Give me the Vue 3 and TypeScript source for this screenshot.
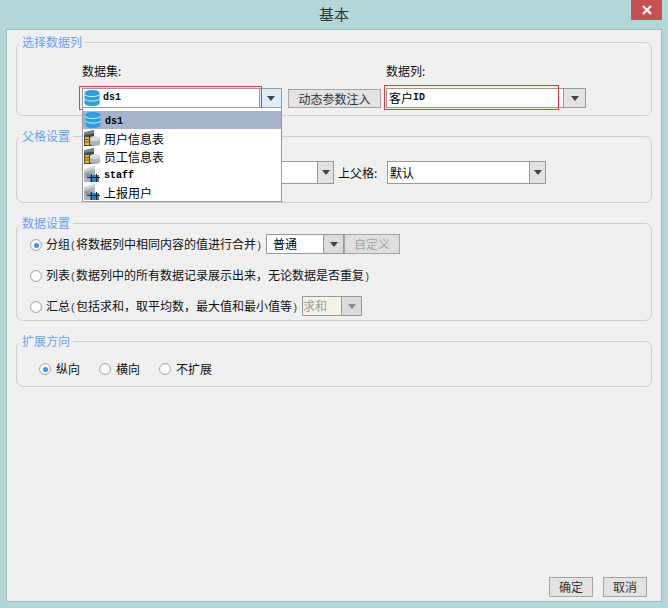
<script setup lang="ts">
interface Item { label: string; mono?: boolean; icon: string; selected?: boolean }
const items: Item[] = [
  { label: 'ds1', mono: true, icon: 'db', selected: true },
  { label: '用户信息表', icon: 'server' },
  { label: '员工信息表', icon: 'server' },
  { label: 'staff', mono: true, icon: 'table' },
  { label: '上报用户', icon: 'table' },
]
</script>

<template>
  <div class="dialog">
    <header class="titlebar">
      <span class="title">基本</span>
      <button class="close" aria-label="关闭">
        <svg width="10" height="10" viewBox="0 0 10 10"><path d="M1 1L9 9M9 1L1 9" stroke="#fff" stroke-width="2.2" /></svg>
      </button>
    </header>

    <main class="panel">
      <div class="groups">
        <fieldset class="group">
          <legend>选择数据列</legend>
          <div class="pick-grid">
            <span class="lab">数据集:</span>
            <span></span>
            <span class="lab">数据列:</span>
            <div class="anchor first">
              <div class="combo">
                <span class="val iconed">
                  <svg class="ic" width="16" height="16" viewBox="0 0 16 16"><use href="#db" /></svg>
                  <span class="mono">ds1</span>
                </span>
                <span class="arrow blue"><i></i></span>
              </div>
              <span class="red r1"></span>
              <ul class="drop">
                <li v-for="it in items" :key="it.label" :class="{ sel: it.selected }">
                  <svg class="ic" width="16" height="16" viewBox="0 0 16 16"><use :href="'#' + it.icon" /></svg>
                  <span class="txt" :class="{ mono: it.mono }">{{ it.label }}</span>
                </li>
              </ul>
            </div>
            <button class="btn inject">动态参数注入</button>
            <div class="anchor">
              <div class="combo">
                <span class="val">客户<span class="mono">ID</span></span>
                <span class="arrow"><i></i></span>
              </div>
              <span class="red r2"></span>
            </div>
          </div>
        </fieldset>

        <fieldset class="group">
          <legend>父格设置</legend>
          <div class="parents">
            <div class="combo tall left"><span class="val"></span><span class="arrow narrow"><i></i></span></div>
            <span class="up">上父格:</span>
            <div class="combo tall right"><span class="val">默认</span><span class="arrow narrow"><i></i></span></div>
          </div>
        </fieldset>

        <fieldset class="group">
          <legend>数据设置</legend>
          <div class="rows">
            <div class="row">
              <span class="radio"><span class="dot"></span></span>
              <span class="rtext">分组<b class="par">(</b>将数据列中相同内容的值进行合并<b class="par">)</b></span>
              <div class="combo mini"><span class="val">普通</span><span class="arrow gray"><i></i></span></div>
              <button class="btn custom" disabled>自定义</button>
            </div>
            <div class="row">
              <span class="radio"></span>
              <span class="rtext">列表<b class="par">(</b>数据列中的所有数据记录展示出来，无论数据是否重复<b class="par">)</b></span>
            </div>
            <div class="row">
              <span class="radio"></span>
              <span class="rtext">汇总<b class="par">(</b>包括求和，取平均数，最大值和最小值等<b class="par">)</b></span>
              <div class="combo sum"><span class="val">求和</span><span class="arrow gray dim"><i></i></span></div>
            </div>
          </div>
        </fieldset>

        <fieldset class="group">
          <legend>扩展方向</legend>
          <div class="dirs">
            <label class="dir"><span class="radio"><span class="dot"></span></span><span class="rtext">纵向</span></label>
            <label class="dir"><span class="radio"></span><span class="rtext">横向</span></label>
            <label class="dir"><span class="radio"></span><span class="rtext">不扩展</span></label>
          </div>
        </fieldset>
      </div>

      <footer class="actions">
        <button class="btn act">确定</button>
        <button class="btn act">取消</button>
      </footer>
    </main>

    <svg width="0" height="0" class="defs" aria-hidden="true">
      <defs>
        <g id="db">
          <path d="M.5 3C.5 1.300 3.500 0 8 0s7.500 1.300 7.500 3v10c0 1.700-3 3-7.500 3S.5 14.700.5 13z" fill="#2b9fe2" />
          <path d="M.5 4.500C2 6 5 6.600 8 6.600s6-.6 7.500-2.100M.5 9C2 10.500 5 11.100 8 11.100S14 10.500 15.500 9" fill="none" stroke="#dff1fb" stroke-width="1" />
        </g>
        <g id="server">
          <path d="M0 2.500L10 0v16H0z" fill="#3f4a50" />
          <path d="M0 2.500L10 0v3.500L0 5z" fill="#6a8a90" />
          <rect x="1" y="7" width="4" height="8" fill="#f2b01e" />
          <path d="M1 9.500h4M1 12h4" stroke="#7a5a10" stroke-width="1" />
          <path d="M6 8.500v5.500c0 1.300 2.200 2 5 2s5-.7 5-2V8.500z" fill="#aeb5ba" />
          <ellipse cx="11" cy="8.500" rx="5" ry="2.500" fill="#d8dcdf" />
        </g>
        <g id="table">
          <path d="M0 3.500L11 0v16H0z" fill="#a9b2b8" />
          <path d="M0 3.500L11 0v3L0 6z" fill="#cfd5d9" />
          <path d="M1.500 8h5M1.500 10h5" stroke="#6f7c85" stroke-width="1" />
          <rect x="6" y="9" width="9" height="7" fill="#2f7fc4" />
          <path d="M3 11.500h13M7.500 8v8M12.500 8v8" stroke="#22262b" stroke-width="1" />
        </g>
      </defs>
    </svg>
  </div>
</template>

<style>
html, body { margin: 0; padding: 0; background: #b3d6d6; }
</style>

<style scoped>
.dialog {
  width: 668px;
  height: 608px;
  display: flex;
  flex-direction: column;
  background: #b3d6d6;
  font: 12px/16px "Noto Sans CJK SC", sans-serif;
  color: #111;
  overflow: hidden;
  position: relative;
}
.defs { position: absolute; }
.titlebar {
  height: 29px;
  flex: none;
  display: flex;
  justify-content: center;
  position: relative;
}
.title { font-size: 15px; line-height: 28px; color: #333; }
.close {
  position: absolute;
  top: 0;
  right: 6px;
  width: 31px;
  height: 20px;
  padding: 0;
  border: 0;
  background: #c75050;
  display: flex;
  align-items: center;
  justify-content: center;
}
.panel {
  flex: 1;
  margin: 0 6px 6px;
  border: 1px solid #9ebcbc;
  background: #f0f0f0;
  padding: 4px 9px 4px;
  display: flex;
  flex-direction: column;
  justify-content: space-between;
}
.groups { display: flex; flex-direction: column; gap: 12px; }
.group {
  margin: 0;
  padding: 0;
  min-width: 0;
  border: 1px solid #cdcdcd;
  border-radius: 7px;
}
legend {
  margin-left: 2px;
  padding: 0 3px;
  color: #6b9ff0;
  line-height: 16px;
}

.pick-grid {
  display: grid;
  grid-template-columns: 206px 98px 200px;
  row-gap: 10px;
  align-items: center;
  padding: 12px 0 7px 65px;
}
.lab { padding-top: 2px; height: 14px; line-height: 14px; }
.anchor { position: relative; }
.first { width: 200px; }

.combo {
  box-sizing: border-box;
  height: 20px;
  display: flex;
  border: 1px solid #999;
  background: #fff;
}
.val {
  flex: 1;
  min-width: 0;
  padding-left: 2px;
  line-height: 18px;
  display: flex;
  align-items: center;
  white-space: nowrap;
  color: #000;
}
.iconed { gap: 3px; padding-left: 1px; }
.arrow {
  flex: none;
  width: 21px;
  border-left: 1px solid #999;
  background: #e2e2e2;
  display: flex;
  align-items: center;
  justify-content: center;
}
.arrow i {
  width: 0;
  height: 0;
  border-left: 4.500px solid transparent;
  border-right: 4.500px solid transparent;
  border-top: 5px solid #444;
}
.arrow.blue { background: #e0ecfa; }
.arrow.narrow { width: 15px; }
.arrow.gray { background: #dcdcdc; width: 19px; }
.arrow.dim i { border-top-color: #8a8a8a; }
.mono {
  font-family: "Liberation Mono", monospace;
  font-size: 10px;
  font-weight: 700;
  color: #111;
}
.red {
  position: absolute;
  border: 1px solid #e8393c;
  pointer-events: none;
}
.r1 { left: -3px; top: -2px; width: 181px; height: 22px; }
.r2 { left: -2px; top: -3px; width: 173px; height: 23px; }

.drop {
  position: absolute;
  left: 0;
  top: 20px;
  z-index: 2;
  box-sizing: border-box;
  width: 200px;
  height: 94px;
  margin: 0;
  padding: 3px 0 0 1px;
  list-style: none;
  background: #fff;
  border: 1px solid #999;
  border-top: 0;
}
.drop li {
  height: 18px;
  display: flex;
  align-items: center;
  gap: 4px;
}
.drop li.sel { background: #a8b4cc; margin-left: -1px; padding-left: 2px; }
.txt { padding-top: 2px; line-height: 14px; color: #000; }
.txt.mono { padding-top: 4px; }
.ic { flex: none; }

.btn {
  box-sizing: border-box;
  height: 20px;
  padding: 0;
  border: 1px solid #a5a5a5;
  background: #e3e3e3;
  color: #333;
  font: inherit;
}
.inject { width: 93px; height: 19px; margin-top: 1px; }
.parents { display: flex; align-items: center; height: 23px; padding: 17px 0 18px 150px; }
.combo.tall { height: 23px; }
.left { width: 167px; }
.up { margin-left: 4px; width: 49px; }
.right { width: 159px; }

.rows { display: flex; flex-direction: column; gap: 11px; padding: 3px 0 4px 13px; }
.row { display: flex; align-items: center; height: 20px; }
.radio {
  flex: none;
  box-sizing: border-box;
  width: 12px;
  height: 12px;
  margin-top: 2px;
  border: 1px solid #a8a8a8;
  border-radius: 50%;
  background: radial-gradient(circle, #fff 0 45%, #e6e6e6 100%);
  margin-right: 4px;
  display: flex;
  align-items: center;
  justify-content: center;
}
.dot { width: 5px; height: 5px; border-radius: 50%; background: #3f8ff0; }
.par { display: inline-block; width: 6px; font-weight: 400; font-family: "Liberation Mono", monospace; font-size: 10px; color: #333; text-align: center; }
.rtext { white-space: nowrap; padding-top: 2px; }
.mini { width: 78px; margin-left: 4px; }
.mini .val { padding-left: 6px; }
.custom { width: 56px; color: #a5a5a5; background: #dfdfdf; }
.sum { width: 60px; margin-left: 4px; background: #f3f3ea; }
.sum .val { padding-left: 0; color: #999; }
.dirs { display: flex; gap: 21px; height: 20px; align-items: center; padding: 9px 0 8px 22px; }
.dir { display: flex; align-items: center; width: 39px; white-space: nowrap; }
.dir .radio { margin-right: 5px; }
.actions { display: flex; gap: 10px; justify-content: flex-end; margin-right: 5px; }
.act { width: 44px; }
</style>
